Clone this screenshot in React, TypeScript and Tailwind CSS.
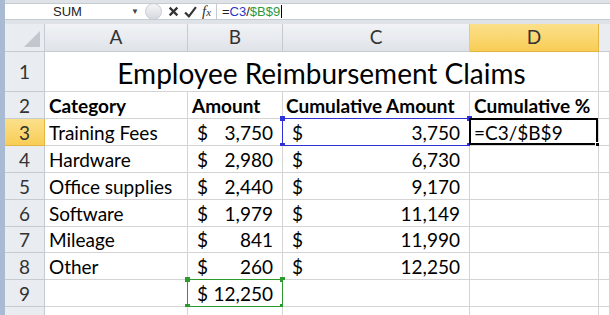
import React from 'react';

const font = { fontFamily: 'Lato, "Open Sans", "Liberation Sans", sans-serif' };

interface Row {
  n: number;
  cat: string;
  amt: string;
  cum: string;
}

const rows: Row[] = [
  { n: 4, cat: 'Hardware', amt: '2,980', cum: '6,730' },
  { n: 5, cat: 'Office supplies', amt: '2,440', cum: '9,170' },
  { n: 6, cat: 'Software', amt: '1,979', cum: '11,149' },
  { n: 7, cat: 'Mileage', amt: '841', cum: '11,990' },
  { n: 8, cat: 'Other', amt: '260', cum: '12,250' },
];

const cell = 'border-r border-b border-[#d4d4d4] bg-white relative';
const rowHead =
  'border-r border-b border-[#c5cbd3] bg-[#e9ecf1] flex items-center justify-center text-[19px] text-[#333] pt-[2px]';

const Handle = ({ className }: { className: string }) => (
  <div className={`absolute w-[5px] h-[5px] ${className}`} />
);

export default function App() {
  return (
    <div className="w-[610px] h-[315px] overflow-hidden bg-[#dfe3e8] flex" style={font}>
      {/* left window edge */}
      <div className="w-[5px] shrink-0 bg-[#a9bad3]" />
      <div className="flex-1 flex flex-col">
        {/* formula bar */}
        <div className="mt-[3px] h-[17px] bg-white border-y border-[#c5cbd3] flex items-center text-[13px]" style={{ fontFamily: '"Liberation Sans", sans-serif' }}>
          <div className="w-[140px] flex items-center shrink-0">
            <span className="ml-[48px] text-[#222]">SUM</span>
            <span className="ml-auto mr-[6px] text-[8px] text-[#444]">▼</span>
          </div>
          <div className="w-[17px] h-[17px] rounded-full bg-gradient-to-b from-[#f4f5f7] to-[#d5d9df] border border-[#c9ced6] shrink-0" />
          <div className="flex items-center gap-[5px] ml-[6px] w-[48px] shrink-0">
            <svg width="11" height="11" viewBox="0 0 10 10"><path d="M1.5 1.5 L8.5 8.5 M8.5 1.5 L1.5 8.5" stroke="#333" strokeWidth="2" /></svg>
            <svg width="13" height="12" viewBox="0 0 12 11"><path d="M1 6 L4.5 9.5 L11 1" stroke="#333" strokeWidth="2" fill="none" /></svg>
            <span className="italic text-[15px] text-[#333] leading-none" style={{ fontFamily: '"Liberation Serif", serif' }}>f<span className="text-[11px]">x</span></span>
          </div>
          <div className="h-full border-l border-[#c5cbd3]" />
          <div className="ml-[5px] flex items-center">
            <span className="text-[#222]">=</span>
            <span className="text-[#2b36c8]">C3</span>
            <span className="text-[#222]">/</span>
            <span className="text-[#2e9a3a]">$B$9</span>
            <span className="w-px h-[13px] bg-black ml-[1px]" />
          </div>
        </div>

        {/* sheet grid */}
        <div className="mt-[4px] grid grid-cols-[40px_143px_95px_187px_129px_1fr] grid-rows-[28px_40px_27px_27px_27px_27px_27px_26px_27px_27px_27px] text-[19px] text-black">
          {/* column headers */}
          <div className="border-r border-b border-[#c5cbd3] bg-[#e9ecf1] relative">
            <div className="absolute right-[4px] bottom-[4px] w-0 h-0 border-l-[16px] border-l-transparent border-b-[16px] border-b-[#c3c7cd]" />
          </div>
          {['A', 'B', 'C'].map((c) => (
            <div key={c} className="border-r border-b border-[#c5cbd3] bg-gradient-to-b from-[#f1f3f6] to-[#dfe3e8] flex items-center justify-center text-[#333]">{c}</div>
          ))}
          <div className="border-r border-b border-[#e2b545] bg-gradient-to-b from-[#fbe08a] to-[#f8cd54] flex items-center justify-center text-[#333]">D</div>
          <div className="border-b border-[#c5cbd3] bg-[#e9ecf1]" />

          {/* row 1 */}
          <div className={rowHead}>1</div>
          <div className="col-span-4 border-r border-b border-[#d4d4d4] bg-white flex items-center justify-center text-[28px] pt-[2px]">
            Employee Reimbursement Claims
          </div>
          <div className={cell} />

          {/* row 2 */}
          <div className={rowHead}>2</div>
          <div className={`${cell} font-bold flex items-center pl-[4px] pt-[2px]`}>Category</div>
          <div className={`${cell} font-bold flex items-center pl-[4px] pt-[2px]`}>Amount</div>
          <div className={`${cell} font-bold flex items-center pl-[3px] pt-[2px]`}>Cumulative Amount</div>
          <div className={`${cell} font-bold flex items-center pl-[4px] pt-[2px]`}>Cumulative %</div>
          <div className={cell} />

          {/* row 3 */}
          <div className="border-r border-b border-[#e2b545] bg-gradient-to-b from-[#fbe08a] to-[#f8cd54] flex items-center justify-center text-[19px] text-[#333] pt-[2px]">3</div>
          <div className={`${cell} flex items-center pl-[4px] pt-[2px]`}>Training Fees</div>
          <div className={`${cell} flex items-center pl-[9px] pr-[9px] pt-[2px]`}>
            <span>$</span>
            <span className="ml-auto">3,750</span>
          </div>
          <div className={`${cell} flex items-center pl-[9px] pr-[9px] pt-[2px]`}>
            <span>$</span>
            <span className="ml-auto">3,750</span>
            {/* range finder for C3 */}
            <div className="absolute inset-[-1px] border border-[#3030d8] pointer-events-none" />
            <Handle className="left-[-3px] top-[-3px] bg-[#3030d8]" />
            <Handle className="left-[-3px] bottom-[-3px] bg-[#3030d8]" />
            <Handle className="right-[-3px] top-[-3px] bg-[#3030d8]" />
            <Handle className="right-[-3px] bottom-[-3px] bg-[#3030d8]" />
          </div>
          <div className={`${cell} flex items-center pl-[4px] pt-[2px]`}>
            =C3/$B$9
            <div className="absolute left-[-1px] top-[-1px] right-0 bottom-0 border-2 border-black pointer-events-none" />
            <div className="absolute right-[-3px] bottom-[-3px] w-[6px] h-[6px] bg-black border border-white" />
          </div>
          <div className={cell} />

          {/* rows 4-8 */}
          {rows.map((r) => (
            <React.Fragment key={r.n}>
              <div className={rowHead}>{r.n}</div>
              <div className={`${cell} flex items-center pl-[4px] pt-[2px]`}>{r.cat}</div>
              <div className={`${cell} flex items-center pl-[9px] pr-[9px] pt-[2px]`}>
                <span>$</span>
                <span className="ml-auto">{r.amt}</span>
              </div>
              <div className={`${cell} flex items-center pl-[9px] pr-[9px] pt-[2px]`}>
                <span>$</span>
                <span className="ml-auto">{r.cum}</span>
              </div>
              <div className={cell} />
              <div className={cell} />
            </React.Fragment>
          ))}

          {/* row 9 */}
          <div className={rowHead}>9</div>
          <div className={cell} />
          <div className={`${cell} flex items-center pl-[9px] pr-[9px] pt-[2px]`}>
            <span>$</span>
            <span className="ml-auto">12,250</span>
            <div className="absolute inset-[-1px] border border-[#2c9a2c] pointer-events-none" />
            <Handle className="left-[-3px] top-[-3px] bg-[#2c9a2c]" />
            <Handle className="left-[-3px] bottom-[-3px] bg-[#2c9a2c]" />
            <Handle className="right-[-3px] top-[-3px] bg-[#2c9a2c]" />
            <Handle className="right-[-3px] bottom-[-3px] bg-[#2c9a2c]" />
          </div>
          <div className={cell} />
          <div className={cell} />
          <div className={cell} />

          {/* row 10 (cut off by the window) */}
          <div className={rowHead} />
          <div className={cell} />
          <div className={cell} />
          <div className={cell} />
          <div className={cell} />
          <div className={cell} />
        </div>
      </div>
    </div>
  );
}
